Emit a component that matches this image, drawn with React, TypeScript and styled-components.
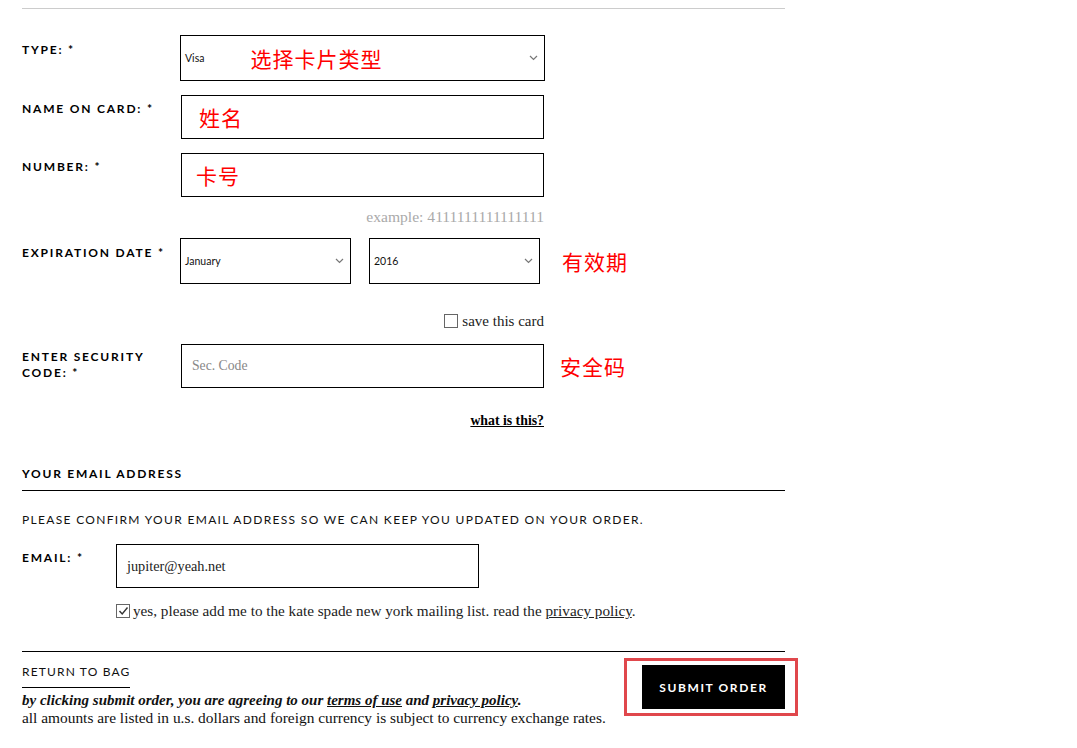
import React from 'react';
import styled, { createGlobalStyle } from 'styled-components';

const Global = createGlobalStyle`
  html, body { margin: 0; padding: 0; background: #fff; }
  body { font-family: "Liberation Serif", serif; color: #000; }
`;

const Page = styled.div`
  width: 763px;
  padding: 8px 0 30px 22px;
`;

const Rule = styled.div<{ $color?: string; $top?: number }>`
  height: 1px;
  background: ${p => p.$color || '#000'};
  margin-top: ${p => p.$top || 0}px;
`;

const Row = styled.div<{ $top: number }>`
  display: flex;
  align-items: flex-start;
  margin-top: ${p => p.$top}px;
`;

const Label = styled.div<{ $pad: number; $width?: number }>`
  width: ${p => p.$width || 158}px;
  flex: none;
  padding-top: ${p => p.$pad}px;
  font-family: Lato, "Liberation Sans", sans-serif;
  font-weight: 700;
  font-size: 12px;
  line-height: 16px;
  letter-spacing: 1.8px;
  text-transform: uppercase;
`;

const SelectBox = styled.div<{ $width: number; $gap?: number }>`
  position: relative;
  box-sizing: border-box;
  width: ${p => p.$width}px;
  height: 46px;
  margin-left: ${p => p.$gap || 0}px;
  border: 1px solid #000;
  display: flex;
  align-items: center;
  padding-left: 4px;
  font-family: Lato, "Liberation Sans", sans-serif;
  font-size: 10.5px;
  color: #111;
`;

const Chevron = styled.svg`
  position: absolute;
  right: 6px;
  top: 50%;
  margin-top: -3px;
`;

const InputBox = styled.div<{ $width: number; $offset?: number }>`
  box-sizing: border-box;
  width: ${p => p.$width}px;
  height: 44px;
  margin-left: ${p => p.$offset || 0}px;
  border: 1px solid #000;
  display: flex;
  align-items: center;
  padding-left: 10px;
  font-size: 14.3px;
  color: #222;
`;

const Placeholder = styled.span`
  color: #888;
  font-size: 13.7px;
`;

const Note = styled.span<{ $left?: number }>`
  font-family: "Noto Sans CJK SC", sans-serif;
  color: #f00;
  font-size: 21px;
  line-height: 24px;
  margin-left: ${p => p.$left || 0}px;
  letter-spacing: 1px;
`;

const AsideNote = styled(Note)`
  align-self: center;
`;

const RightCol = styled.div<{ $size?: number }>`
  width: 522px;
  display: flex;
  justify-content: flex-end;
  align-items: center;
  gap: 4px;
  font-size: ${p => p.$size || 15}px;
  line-height: 16px;
  color: #222;
`;

const Example = styled(RightCol)`
  color: #aaa;
`;

const Box = styled.span`
  box-sizing: border-box;
  width: 14px;
  height: 14px;
  border: 1px solid #666;
  display: inline-flex;
  align-items: center;
  justify-content: center;
  flex: none;
`;

const SmallLink = styled.a`
  font-weight: 700;
  color: #000;
  text-decoration: underline;
`;

const Heading = styled.div`
  margin-top: 38px;
  padding-bottom: 9px;
  border-bottom: 1px solid #000;
  font-family: Lato, "Liberation Sans", sans-serif;
  font-weight: 700;
  font-size: 12px;
  line-height: 14px;
  letter-spacing: 1.75px;
`;

const Caps = styled.div`
  margin-top: 22px;
  font-family: Lato, "Liberation Sans", sans-serif;
  font-size: 12px;
  line-height: 14px;
  letter-spacing: 1.32px;
  color: #111;
`;

const CheckRow = styled.div`
  margin: 15px 0 0 94px;
  display: flex;
  align-items: center;
  gap: 3px;
  font-size: 15.2px;
  line-height: 16px;
  color: #222;
  a { color: #222; text-decoration: underline; }
`;

const Footer = styled.div`
  display: flex;
  justify-content: space-between;
  align-items: flex-start;
`;

const FooterText = styled.div`
  padding-top: 10px;
`;

const BackLink = styled.a`
  display: inline-block;
  padding-bottom: 8px;
  border-bottom: 1px solid #000;
  font-family: Lato, "Liberation Sans", sans-serif;
  font-size: 12px;
  line-height: 14px;
  letter-spacing: 1.15px;
  color: #111;
  text-decoration: none;
`;

const Legal = styled.div`
  margin-top: 4px;
  font-size: 15.4px;
  line-height: 17px;
  color: #111;
`;

const LegalEm = styled.div`
  font-style: italic;
  font-weight: 700;
  font-size: 15px;
  a { color: #111; text-decoration: underline; }
`;

const Submit = styled.button`
  position: relative;
  margin-top: 13px;
  width: 143px;
  height: 44px;
  border: 0;
  background: #000;
  color: #fff;
  font-family: Lato, "Liberation Sans", sans-serif;
  font-weight: 700;
  font-size: 12px;
  letter-spacing: 1.6px;
  padding: 0;
  &::after {
    content: '';
    position: absolute;
    top: -7px;
    left: -18px;
    right: -13px;
    bottom: -7px;
    border: 3px solid #e0474c;
  }
`;

const ChevronIcon = () => (
  <Chevron width="9" height="6" viewBox="0 0 9 6">
    <polyline points="1,1 4.5,4.5 8,1" fill="none" stroke="#777" strokeWidth="1.2" />
  </Chevron>
);

export default function App() {
  return (
    <>
      <Global />
      <Page>
        <Rule $color="#ccc" />

        <Row $top={26}>
          <Label $pad={7}>Type: *</Label>
          <SelectBox $width={365}>
            Visa
            <Note $left={46}>选择卡片类型</Note>
            <ChevronIcon />
          </SelectBox>
        </Row>

        <Row $top={14}>
          <Label $pad={6}>Name on card: *</Label>
          <InputBox $width={363} $offset={1}>
            <Note $left={7}>姓名</Note>
          </InputBox>
        </Row>

        <Row $top={14}>
          <Label $pad={6}>Number: *</Label>
          <InputBox $width={363} $offset={1}>
            <Note $left={4}>卡号</Note>
          </InputBox>
        </Row>

        <Row $top={12}>
          <Example $size={15.6}>example: 4111111111111111</Example>
        </Row>

        <Row $top={13}>
          <Label $pad={7}>Expiration date *</Label>
          <SelectBox $width={171}>
            January
            <ChevronIcon />
          </SelectBox>
          <SelectBox $width={171} $gap={18}>
            2016
            <ChevronIcon />
          </SelectBox>
          <AsideNote $left={22}>有效期</AsideNote>
        </Row>

        <Row $top={29}>
          <RightCol>
            <Box />
            save this card
          </RightCol>
        </Row>

        <Row $top={15}>
          <Label $pad={5}>Enter security<br />code: *</Label>
          <InputBox $width={363} $offset={1}>
            <Placeholder>Sec. Code</Placeholder>
          </InputBox>
          <AsideNote $left={16}>安全码</AsideNote>
        </Row>

        <Row $top={25}>
          <RightCol $size={13.8}>
            <SmallLink href="#">what is this?</SmallLink>
          </RightCol>
        </Row>

        <Heading>YOUR EMAIL ADDRESS</Heading>
        <Caps>PLEASE CONFIRM YOUR EMAIL ADDRESS SO WE CAN KEEP YOU UPDATED ON YOUR ORDER.</Caps>

        <Row $top={17}>
          <Label $pad={6} $width={94}>Email: *</Label>
          <InputBox $width={363}>jupiter@yeah.net</InputBox>
        </Row>

        <CheckRow>
          <Box>
            <svg width="11" height="10" viewBox="0 0 11 10">
              <polyline points="1.5,5 4.2,8 9.5,1.5" fill="none" stroke="#333" strokeWidth="1.4" />
            </svg>
          </Box>
          <span>
            yes, please add me to the kate spade new york mailing list. read the <a href="#">privacy policy</a>.
          </span>
        </CheckRow>

        <Rule $top={32} />

        <Footer>
          <FooterText>
            <BackLink href="#">RETURN TO BAG</BackLink>
            <Legal>
              <LegalEm>
                by clicking submit order, you are agreeing to our <a href="#">terms of use</a> and <a href="#">privacy policy</a>.
              </LegalEm>
              <div>all amounts are listed in u.s. dollars and foreign currency is subject to currency exchange rates.</div>
            </Legal>
          </FooterText>
          <Submit>SUBMIT ORDER</Submit>
        </Footer>
      </Page>
    </>
  );
}
